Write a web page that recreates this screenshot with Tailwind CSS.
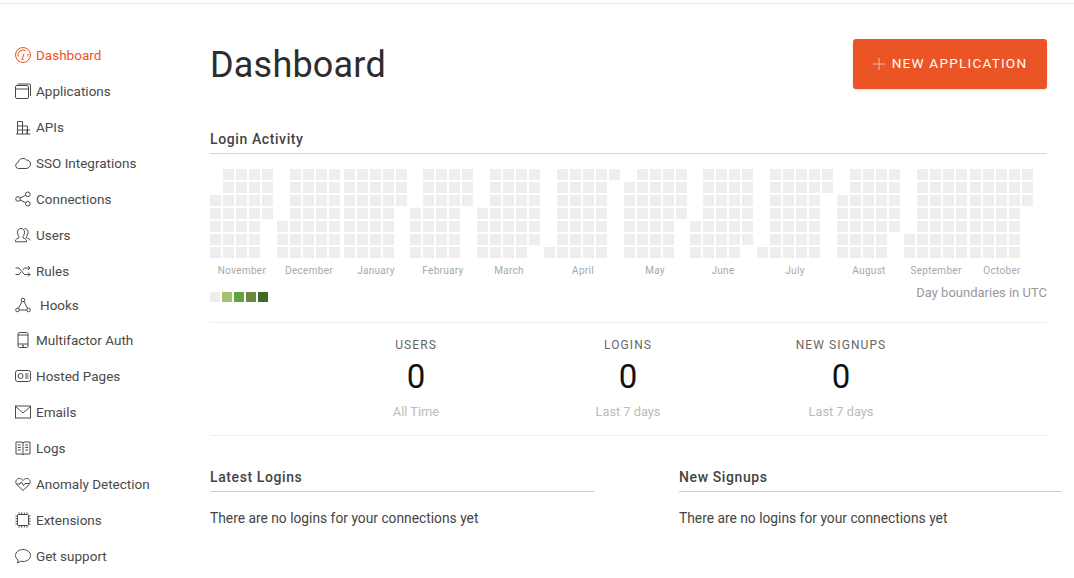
<!DOCTYPE html>
<html>
<head>
<meta charset="utf-8">
<title>Dashboard</title>
<script src="https://cdn.jsdelivr.net/npm/@tailwindcss/browser@4"></script>
</head>
<body class="bg-white font-['Roboto','Liberation_Sans',sans-serif] text-[#333] overflow-hidden">
<div class="w-[1074px] h-[578px] overflow-hidden flex flex-col">
  <div class="h-[4px] border-b border-[#e8e8e8] shrink-0"></div>
  <div class="flex">
    <!-- sidebar -->
    <nav class="w-[210px] shrink-0 pl-[15px] pt-[33px] text-[13.5px] text-[#4a4a4a]">
      <a class="flex items-center gap-[5px] h-[36px] text-[#eb5424]">
        <svg class="w-[16px] h-[16px]" viewBox="0 0 16 16" fill="none" stroke="currentColor" stroke-width="1"><circle cx="8" cy="8" r="7.500"/><path d="M3.200 9.500a4.900 4.900 0 0 1 7.500-5.600M12.800 7a4.900 4.900 0 0 1 0 2.500M7.300 12l1.700-5M6.500 12.500h2"/></svg>
        Dashboard</a>
      <a class="flex items-center gap-[5px] h-[36px]">
        <svg class="w-[16px] h-[16px]" viewBox="0 0 16 16" fill="none" stroke="currentColor" stroke-width="1"><rect x=".5" y="2.500" width="13" height="13" rx="1.500"/><path d="M.5 6h13M2.500 1h12a1 1 0 0 1 1 1v11"/></svg>
        Applications</a>
      <a class="flex items-center gap-[5px] h-[36px]">
        <svg class="w-[16px] h-[16px]" viewBox="0 0 16 16" fill="none" stroke="currentColor" stroke-width="1"><path d="M2.500 15V2.500h5V15M2.500 7h10v8M2.500 11h12.500M7.500 7v8M12 11v4M1 15h14.500"/></svg>
        APIs</a>
      <a class="flex items-center gap-[5px] h-[36px]">
        <svg class="w-[16px] h-[16px]" viewBox="0 0 16 16" fill="none" stroke="currentColor" stroke-width="1"><path d="M3.500 13.500a3 3 0 0 1-.6-5.900C3.500 5 6 3 9 3.500c1 .2 1.800.8 2.400 1.500 2.400-.3 4.100 1.700 4.100 4 0 2.500-2 4.500-4.500 4.500z"/></svg>
        SSO Integrations</a>
      <a class="flex items-center gap-[5px] h-[36px]">
        <svg class="w-[16px] h-[16px]" viewBox="0 0 16 16" fill="none" stroke="currentColor" stroke-width="1"><circle cx="3" cy="8" r="2.300"/><circle cx="12.800" cy="3.300" r="2.300"/><circle cx="12.800" cy="12.700" r="2.300"/><path d="M5 7l5.800-2.800M5 9l5.800 2.800"/></svg>
        Connections</a>
      <a class="flex items-center gap-[5px] h-[36px]">
        <svg class="w-[16px] h-[16px]" viewBox="0 0 16 16" fill="none" stroke="currentColor" stroke-width="1"><path d="M6 1.500c2.500 0 3.800 2 3.500 4.300-.2 1.600-1 3-1.500 3.700v1.300c1.500.8 3.500 1.200 3.500 3v1H.5v-1c0-1.800 2-2.200 3.500-3V9.500C3.500 8.800 2.700 7.400 2.500 5.800 2.200 3.500 3.500 1.500 6 1.500zM9.500 1.500c2.500 0 3.800 2 3.500 4.300-.2 1.600-1 3-1.500 3.700v1.300c1.500.6 3.500 1 3.500 2.700"/></svg>
        Users</a>
      <a class="flex items-center gap-[5px] h-[36px]">
        <svg class="w-[16px] h-[16px]" viewBox="0 0 16 16" fill="none" stroke="currentColor" stroke-width="1"><path d="M.5 5H4l5.500 6.500H15M.5 11.500H4L6 9M8 7l1.500-2H15M13 3l2 2-2 2M13 9.500l2 2-2 2"/></svg>
        Rules</a>
      <a class="flex items-center gap-[9px] h-[34px] -mt-[1px]">
        <svg class="w-[16px] h-[16px]" viewBox="0 0 16 16" fill="none" stroke="currentColor" stroke-width="1"><circle cx="8" cy="3" r="1.800"/><circle cx="2.500" cy="13" r="1.800"/><circle cx="13.500" cy="13" r="1.800"/><path d="M7 4.500l-3.700 7M9 4.500l3.700 7M4.300 13h7.400"/></svg>
        Hooks</a>
      <a class="flex items-center gap-[5px] h-[36px]">
        <svg class="w-[16px] h-[16px]" viewBox="0 0 16 16" fill="none" stroke="currentColor" stroke-width="1"><rect x="3" y=".5" width="10" height="15" rx="1.500"/><path d="M3 3h10M3 12h10"/><circle cx="8" cy="13.800" r=".6" fill="currentColor"/></svg>
        Multifactor Auth</a>
      <a class="flex items-center gap-[5px] h-[36px]">
        <svg class="w-[16px] h-[16px]" viewBox="0 0 16 16" fill="none" stroke="currentColor" stroke-width="1"><rect x=".5" y="2.500" width="15" height="11" rx="2"/><circle cx="5.500" cy="8" r="2.500"/><path d="M10 6h3.500M10 8h3.500M10 10h3.500"/></svg>
        Hosted Pages</a>
      <a class="flex items-center gap-[5px] h-[36px]">
        <svg class="w-[16px] h-[16px]" viewBox="0 0 16 16" fill="none" stroke="currentColor" stroke-width="1"><rect x=".5" y="2" width="15" height="12"/><path d="M.5 2.500L8 9l7.500-6.500"/></svg>
        Emails</a>
      <a class="flex items-center gap-[5px] h-[36px]">
        <svg class="w-[16px] h-[16px]" viewBox="0 0 16 16" fill="none" stroke="currentColor" stroke-width="1"><path d="M1 2h6l1 1 1-1h6v12H9l-1 1-1-1H1zM8 3v12M2.800 5h3M2.800 7.500h3M2.800 10h3M10.200 5h3M10.200 7.500h3M10.200 10h3"/></svg>
        Logs</a>
      <a class="flex items-center gap-[5px] h-[36px]">
        <svg class="w-[16px] h-[16px]" viewBox="0 0 16 16" fill="none" stroke="currentColor" stroke-width="1"><path d="M8 14.500L1.800 8.500C-.2 6.300 1 2.500 4.300 2.500c1.700 0 3 .9 3.700 2 .7-1.100 2-2 3.700-2 3.300 0 4.500 3.800 2.500 6zM1.500 8h3.500l1.500-2 2 3.500 1.500-2h4.500"/></svg>
        Anomaly Detection</a>
      <a class="flex items-center gap-[5px] h-[36px]">
        <svg class="w-[16px] h-[16px]" viewBox="0 0 16 16" fill="none" stroke="currentColor" stroke-width="1"><rect x="2.500" y="2.500" width="11" height="11" rx="1"/><path d="M4 .5v2M6.700 .5v2M9.300 .5v2M12 .5v2M4 13.500v2M6.700 13.500v2M9.300 13.500v2M12 13.500v2M.5 4h2M.5 6.700h2M.5 9.300h2M.5 12h2M13.500 4h2M13.500 6.700h2M13.500 9.300h2M13.500 12h2"/></svg>
        Extensions</a>
      <a class="flex items-center gap-[5px] h-[36px]">
        <svg class="w-[16px] h-[16px]" viewBox="0 0 16 16" fill="none" stroke="currentColor" stroke-width="1"><path d="M8 1.500c4 0 7.500 2.500 7.500 6s-3.500 6-7.500 6c-.8 0-1.500-.1-2.200-.3L2.500 15l.6-3C1.500 11 .5 9.400.5 7.500c0-3.500 3.500-6 7.500-6z"/></svg>
        Get support</a>
    </nav>
    <!-- main -->
    <main class="w-[837px] shrink-0">
      <div class="flex justify-between items-center h-[50px] mt-[35px]">
        <h1 class="text-[36px] tracking-[0.2px] text-[#2d2d2d] pt-[2px]">Dashboard</h1>
        <button class="flex items-center justify-center gap-[7px] w-[194px] h-[50px] bg-[#eb5424] rounded-[3px] text-white text-[13.600px] tracking-[1.200px] shadow-sm">
          <svg class="w-[12px] h-[12px]" viewBox="0 0 12 12" fill="none" stroke="#f9b79f" stroke-width="1"><path d="M6 0v12M0 6h12"/></svg>
          <span class="-mt-[1px]">NEW APPLICATION</span></button>
      </div>
      <h2 class="mt-[35px] text-[14px] font-medium tracking-[0.6px] text-[#444] h-[30px] leading-[30px] border-b border-[#d8d8d8]">Login Activity</h2>
      <div id="heatmap" class="flex gap-[3.750px] mt-[15px] h-[89px]"></div>
      <div id="months" class="relative h-[14px] mt-[5px] text-[10px] tracking-[0.3px] text-[#a8a8a8]"></div>
      <div class="flex justify-between items-start mt-[9px] h-[16px]">
        <div class="flex gap-[2px] mt-[6px]">
          <span class="w-[10px] h-[10px] bg-[#eeeeee]"></span>
          <span class="w-[10px] h-[10px] bg-[#a4c26e]"></span>
          <span class="w-[10px] h-[10px] bg-[#62a33f]"></span>
          <span class="w-[10px] h-[10px] bg-[#6b8a3e]"></span>
          <span class="w-[10px] h-[10px] bg-[#3a6b27]"></span>
        </div>
        <span class="text-[13px] leading-[14px] text-[#999]">Day boundaries in UTC</span>
      </div>
      <div class="mt-[20px] border-t border-b border-[#eeeeee] h-[114px] relative">
        <div class="absolute left-[106px] top-[13px] w-[200px] text-center">
          <div class="text-[12px] tracking-[1.100px] text-[#666]">USERS</div>
          <div class="text-[33px] leading-[38px] text-[#111] mt-[4px]">0</div>
          <div class="text-[12.800px] text-[#bbb] mt-[6px]">All Time</div>
        </div>
        <div class="absolute left-[318px] top-[13px] w-[200px] text-center">
          <div class="text-[12px] tracking-[1.100px] text-[#666]">LOGINS</div>
          <div class="text-[33px] leading-[38px] text-[#111] mt-[4px]">0</div>
          <div class="text-[12.800px] text-[#bbb] mt-[6px]">Last 7 days</div>
        </div>
        <div class="absolute left-[531px] top-[13px] w-[200px] text-center">
          <div class="text-[12px] tracking-[1.100px] text-[#666]">NEW SIGNUPS</div>
          <div class="text-[33px] leading-[38px] text-[#111] mt-[4px]">0</div>
          <div class="text-[12.800px] text-[#bbb] mt-[6px]">Last 7 days</div>
        </div>
      </div>
      <div class="flex mt-[27px]">
        <div class="w-[384px] shrink-0">
          <h3 class="text-[14px] font-medium tracking-[0.6px] text-[#444] h-[29px] leading-[29px] border-b border-[#cccccc]">Latest Logins</h3>
          <p class="text-[13.800px] mt-[16px] text-[#444]">There are no logins for your connections yet</p>
        </div>
        <div class="w-[383px] ml-[85px] shrink-0">
          <h3 class="text-[14px] font-medium tracking-[0.6px] text-[#444] h-[29px] leading-[29px] border-b border-[#cccccc]">New Signups</h3>
          <p class="text-[13.800px] mt-[16px] text-[#444]">There are no logins for your connections yet</p>
        </div>
      </div>
    </main>
  </div>
</div>
<script>
  // [name, label centre x relative to main, weeks as [first row, last row]]
  const full = [0, 6];
  const MONTHS = [
    ["November", 32, [[2,6],full,full,full,[0,3]]],
    ["December", 99, [[4,6],full,full,full,full]],
    ["January", 166, [full,full,full,full,[0,2]]],
    ["February", 233, [[3,6],full,full,full,[0,2]]],
    ["March", 299, [[3,6],full,full,full,[0,5]]],
    ["April", 373, [[6,6],full,full,full,full,[0,0]]],
    ["May", 445, [[1,6],full,full,full,[0,3]]],
    ["June", 513, [[4,6],full,full,full,[0,5]]],
    ["July", 585, [[6,6],full,full,full,full,[0,1]]],
    ["August", 659, [[2,6],full,full,full,[0,4]]],
    ["September", 726, [[5,6],full,full,full,full]],
    ["October", 792, [full,full,full,full,[0,2]]]
  ];
  const heatmap = document.getElementById("heatmap");
  const labels = document.getElementById("months");
  MONTHS.forEach(([name, center, weeks]) => {
    const month = document.createElement("div");
    month.className = "flex gap-[2px]";
    weeks.forEach(([a, b]) => {
      const week = document.createElement("div");
      week.className = "flex flex-col gap-[2px] w-[11px]";
      for (let r = 0; r < 7; r++) {
        const cell = document.createElement("div");
        cell.className = r >= a && r <= b ? "w-[11px] h-[11px] bg-[#eeeeee]" : "w-[11px] h-[11px]";
        week.appendChild(cell);
      }
      month.appendChild(week);
    });
    heatmap.appendChild(month);
    const label = document.createElement("span");
    label.className = "absolute -translate-x-1/2";
    label.style.left = center + "px";
    label.textContent = name;
    labels.appendChild(label);
  });
</script>
</body>
</html>
